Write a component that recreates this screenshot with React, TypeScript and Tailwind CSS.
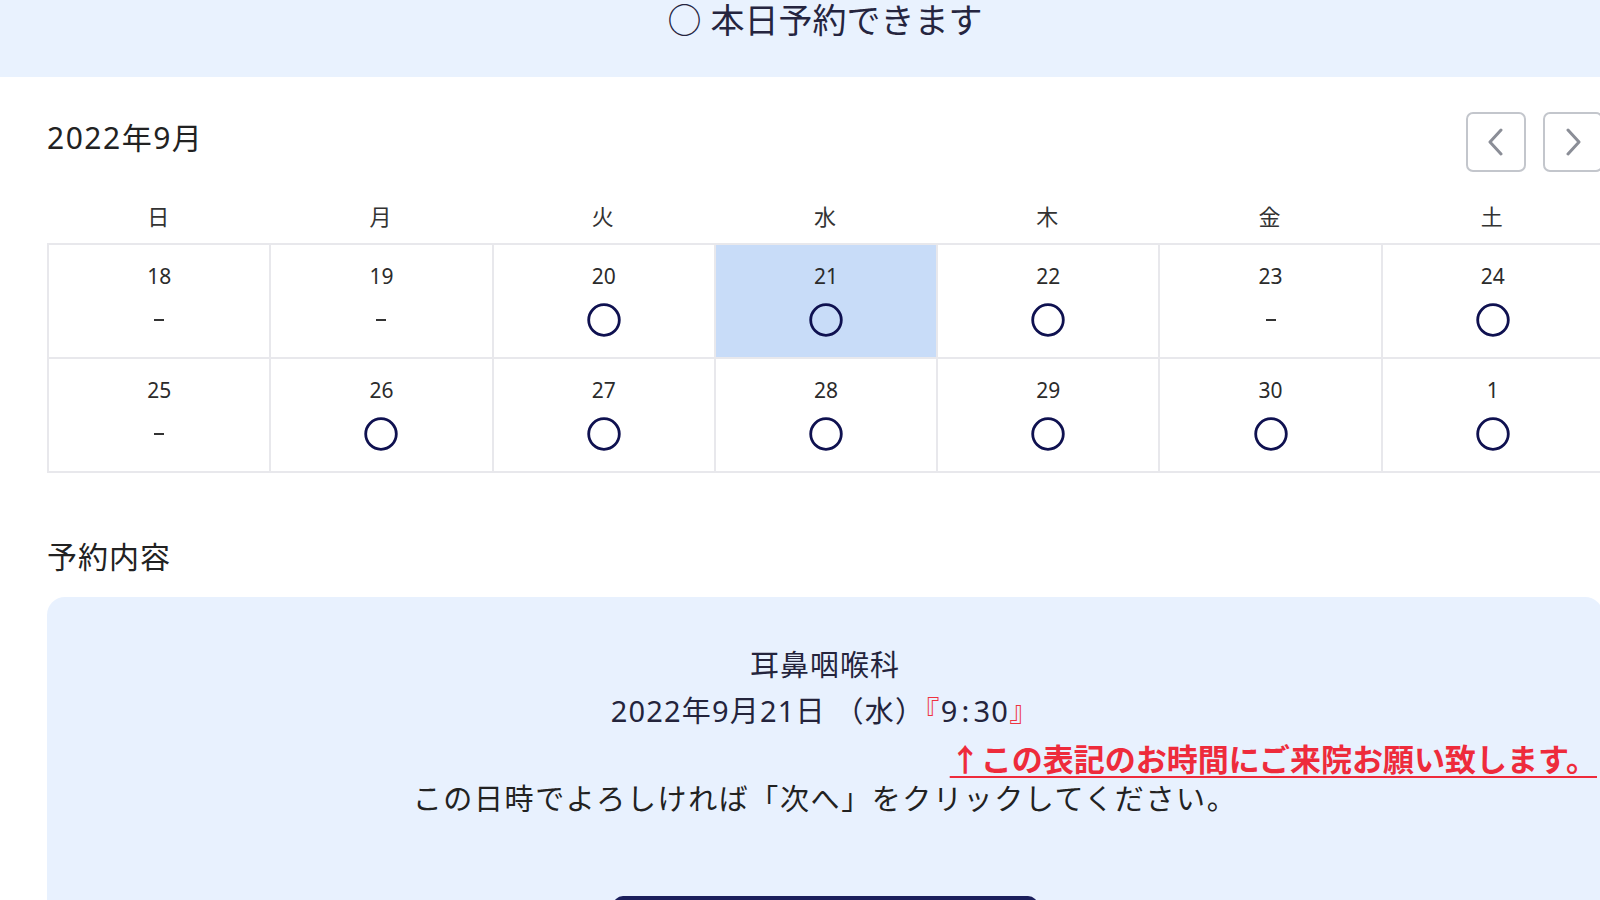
import React from 'react';

type Day = { d: number; ok: boolean; selected?: boolean };

const weekdays = ['日', '月', '火', '水', '木', '金', '土'];

const weeks: Day[][] = [
  [
    { d: 18, ok: false },
    { d: 19, ok: false },
    { d: 20, ok: true },
    { d: 21, ok: true, selected: true },
    { d: 22, ok: true },
    { d: 23, ok: false },
    { d: 24, ok: true },
  ],
  [
    { d: 25, ok: false },
    { d: 26, ok: true },
    { d: 27, ok: true },
    { d: 28, ok: true },
    { d: 29, ok: true },
    { d: 30, ok: true },
    { d: 1, ok: true },
  ],
];

const font = { fontFamily: '"Noto Sans", "Noto Sans CJK JP", sans-serif' };

function Mark() {
  return (
    <svg width="34" height="34" viewBox="0 0 34 34">
      <circle cx="17" cy="17" r="15.3" fill="none" stroke="#0f1150" strokeWidth="2.8" />
    </svg>
  );
}

function NavButton({ dir }: { dir: 'prev' | 'next' }) {
  return (
    <button className="w-[60px] h-[60px] rounded-[7px] border-2 border-[#c3c6cc] bg-white flex items-center justify-center">
      <svg width="20" height="28" viewBox="0 0 20 28">
        <polyline
          points={dir === 'prev' ? '15,2 4,14 15,26' : '5,2 16,14 5,26'}
          fill="none"
          stroke="#8b8e97"
          strokeWidth="3"
          strokeLinecap="round"
          strokeLinejoin="round"
        />
      </svg>
    </button>
  );
}

export default function App() {
  return (
    <div className="w-[1600px] h-[900px] overflow-hidden bg-white text-[#2a2a2e]" style={font}>
      <div className="w-[1650px]">
        {/* バナー */}
        <div className="h-[77px] bg-[#e9f2fe] flex justify-center">
          <p className="text-[34px] leading-[36px] mt-[2px] text-[#25253f]">○ 本日予約できます</p>
        </div>

        <div className="px-[47px]">
          {/* 月ヘッダー */}
          <div className="mt-[35px] h-[60px] flex items-center justify-between">
            <h2 className="text-[30px] leading-[36px] tracking-[1.5px] -mt-[8px] text-[#222]">2022年9月</h2>
            <div className="flex gap-[17px]">
              <NavButton dir="prev" />
              <NavButton dir="next" />
            </div>
          </div>

          {/* 曜日 */}
          <div className="grid grid-cols-7 h-[71px] pt-[32px]">
            {weekdays.map(w => (
              <div key={w} className="text-center text-[22px] leading-[24px] text-[#333]">{w}</div>
            ))}
          </div>

          {/* カレンダー */}
          <div className="border-b-2 border-[#e8e8ec]">
            {weeks.map((week, i) => (
              <div key={i} className="grid grid-cols-7 border-t-2 border-[#e8e8ec]">
                {week.map(day => (
                  <div
                    key={day.d}
                    className={`h-[112px] border-l-2 border-[#e8e8ec] flex flex-col items-center pt-[19px] ${
                      day.selected ? 'bg-[#c8dcf8]' : ''
                    }`}
                  >
                    <span className="text-[21px] leading-[24px] text-[#2b2b2b]">{day.d}</span>
                    <div className="mt-[15px] h-[34px] flex items-center justify-center">
                      {day.ok ? <Mark /> : <span className="block w-[10px] h-[2px] bg-[#333]" />}
                    </div>
                  </div>
                ))}
              </div>
            ))}
          </div>

          {/* 予約内容 */}
          <h3 className="mt-[66px] text-[30px] leading-[36px] tracking-[1px] text-[#222]">予約内容</h3>

          <div className="mt-[22px] rounded-[18px] bg-[#e8f1fe] pt-[45px] h-[400px] flex flex-col items-center">
            <p className="h-[46px] text-[29px] leading-[46px] tracking-[1px] text-[#24243c]">耳鼻咽喉科</p>
            <p className="h-[46px] text-[29px] leading-[46px] tracking-[1.2px] text-[#24243c]">
              2022年9月21日 （水）<span className="text-[#ee3340]">『</span>9<span className="px-[3px]">:</span>30<span className="text-[#ee3340]">』</span>
            </p>
            <p className="self-stretch h-[50px] pr-[6px] text-right text-[31px] leading-[50px] font-bold text-[#ee2b3b] underline decoration-2 underline-offset-[5px]">
              ↑この表記のお時間にご来院お願い致します。
            </p>
            <p className="h-[30px] text-[29px] leading-[30px] tracking-[1.6px] text-[#222]">
              この日時でよろしければ「次へ」をクリックしてください。
            </p>
            <button className="mt-[82px] w-[425px] h-[60px] rounded-[10px] bg-[#1b1f5c]" />
          </div>
        </div>
      </div>
    </div>
  );
}
